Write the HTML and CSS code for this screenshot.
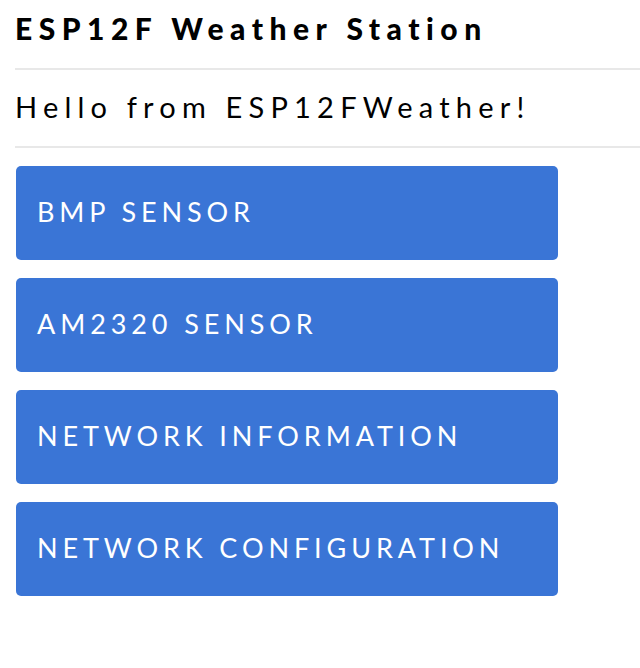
FILE: index.html
```html
<!DOCTYPE html>
<html>
<head>
<meta charset="utf-8">
<link rel="stylesheet" href="styles.css">
</head>
<body>
<div class="page">
  <h1 class="title">ESP12F Weather Station</h1>
  <p class="greeting">Hello from ESP12FWeather!</p>
  <nav class="menu">
    <a class="btn" href="#">BMP SENSOR</a>
    <a class="btn" href="#">AM2320 SENSOR</a>
    <a class="btn" href="#">NETWORK INFORMATION</a>
    <a class="btn" href="#">NETWORK CONFIGURATION</a>
  </nav>
</div>
</body>
</html>
```
FILE: styles.css
```css
html, body {
  margin: 0;
  padding: 0;
  background: #ffffff;
}
.page {
  padding-left: 15px;
  font-family: Lato, "Open Sans", sans-serif;
  color: #000;
}
.title {
  margin: 0;
  height: 70px;
  box-sizing: border-box;
  padding-top: 9px;
  font-size: 30px;
  line-height: 38px;
  font-weight: 900;
  letter-spacing: 6.5px;
  border-bottom: 2px solid #e8e8e8;
}
.greeting {
  margin: 0;
  height: 78px;
  box-sizing: border-box;
  padding-top: 19px;
  font-size: 29px;
  line-height: 36px;
  letter-spacing: 6.2px;
  border-bottom: 2px solid #e8e8e8;
}
.menu {
  display: flex;
  flex-direction: column;
  gap: 18px;
  padding-top: 18px;
  width: 542px;
  padding-left: 1px;
}
.btn {
  display: block;
  height: 94px;
  box-sizing: border-box;
  padding: 29px 0 0 21px;
  background: #3a75d6;
  border-radius: 5px;
  color: #fff;
  text-decoration: none;
  font-size: 27px;
  line-height: 34px;
  letter-spacing: 4.9px;
}
```
